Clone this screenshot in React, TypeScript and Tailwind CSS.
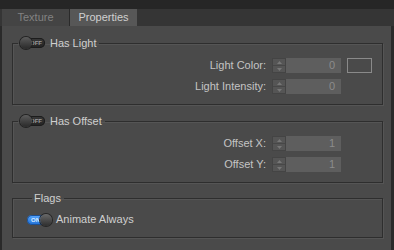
import React from "react";

const font = { fontFamily: '"Liberation Sans", Arial, sans-serif' };

const Toggle = ({ on }: { on?: boolean }) =>
  on ? (
    <div className="relative flex h-[10px] w-[24px] shrink-0 items-center rounded-full bg-gradient-to-b from-[#5aa8ff] to-[#1c6fd6] shadow-[inset_0_0_0_1px_#1b4f93]">
      <span className="ml-[4px] text-[6px] font-bold leading-none text-[#d8ecff]">ON</span>
      <div className="absolute right-[-1px] top-[-1px] h-[12px] w-[12px] rounded-full bg-gradient-to-b from-[#6a6a6a] to-[#2e2e2e] shadow-[0_0_0_1px_#262626]" />
    </div>
  ) : (
    <div className="relative flex h-[10px] w-[24px] shrink-0 items-center justify-end rounded-full bg-gradient-to-b from-[#3a3a3a] to-[#222] shadow-[inset_0_0_0_1px_#1c1c1c]">
      <span className="mr-[3px] text-[6px] font-bold leading-none text-[#9a9a9a]">OFF</span>
      <div className="absolute left-[-1px] top-[-1px] h-[12px] w-[12px] rounded-full bg-gradient-to-b from-[#5c5c5c] to-[#2a2a2a] shadow-[0_0_0_1px_#222]" />
    </div>
  );

const Spinner = () => (
  <div className="flex h-[15px] w-[14px] flex-col border border-[#444] bg-[#555]">
    <div className="flex flex-1 items-center justify-center border-b border-[#474747]">
      <svg width="5" height="3" viewBox="0 0 5 3">
        <path d="M0 3 L2.5 0 L5 3 Z" fill="#777" />
      </svg>
    </div>
    <div className="flex flex-1 items-center justify-center">
      <svg width="5" height="3" viewBox="0 0 5 3">
        <path d="M0 0 L2.5 3 L5 0 Z" fill="#777" />
      </svg>
    </div>
  </div>
);

const Row = ({ label, value, swatch }: { label: string; value: string; swatch?: boolean }) => (
  <div className="flex h-[15px] items-center justify-end pr-[10px]">
    <span className="mr-[6px] text-[11px] text-[#c4c4c4]">{label}</span>
    <Spinner />
    <div className="flex h-[15px] w-[55px] items-center justify-end bg-[#5e5e5e] pr-[6px] text-[11px] text-[#8c8c8c]">
      {value}
    </div>
    <div className="flex w-[31px] justify-end">
      {swatch && <div className="h-[15px] w-[25px] border border-[#8a8a8a] bg-[#4a4a4a]" />}
    </div>
  </div>
);

const Group = ({
  legend,
  children,
  className,
}: {
  legend: React.ReactNode;
  children: React.ReactNode;
  className?: string;
}) => (
  <fieldset
    className={`ml-[10px] mr-[8px] shrink-0 border border-[#2e2e2e] shadow-[1px_1px_0_#555,inset_1px_1px_0_#555] ${className ?? ""}`}
  >
    <legend className="ml-[5px] flex h-[12px] items-center gap-[5px] px-[3px]">{legend}</legend>
    {children}
  </fieldset>
);

export default function App() {
  return (
    <div className="flex h-[250px] w-[394px] flex-col overflow-hidden bg-[#2a2a2a]" style={font}>
      <div className="h-[9px] shrink-0 bg-[#262626]" />
      <div className="flex h-[17px] shrink-0 bg-[#353535] pl-[2px]">
        <div className="flex w-[68px] items-center justify-center border-r border-[#2a2a2a] bg-[#444] text-[11px] text-[#828282]">
          Texture
        </div>
        <div className="flex w-[67px] items-center justify-center bg-[#575757] text-[11px] text-[#d0d0d0]">
          Properties
        </div>
      </div>
      <div className="ml-[2px] mr-[3px] flex flex-1 shrink-0 flex-col bg-[#4a4a4a] pt-[11px]">
        <Group
          legend={
            <>
              <Toggle />
              <span className="text-[11px] leading-none text-[#cfcfcf]">Has Light</span>
            </>
          }
          className="flex flex-col gap-[6px] pb-[10px] pt-[9px]"
        >
          <Row label="Light Color:" value="0" swatch />
          <Row label="Light Intensity:" value="0" />
        </Group>
        <Group
          legend={
            <>
              <Toggle />
              <span className="text-[11px] leading-none text-[#cfcfcf]">Has Offset</span>
            </>
          }
          className="mt-[10px] flex flex-col gap-[6px] pb-[10px] pt-[9px]"
        >
          <Row label="Offset X:" value="1" />
          <Row label="Offset Y:" value="1" />
        </Group>
        <Group
          legend={<span className="-ml-[1px] text-[11px] leading-none text-[#cfcfcf]">Flags</span>}
          className="mt-[9px] pb-[11px] pl-[14px] pt-[9px]"
        >
          <div className="flex h-[13px] items-center gap-[5px]">
            <Toggle on />
            <span className="text-[11px] leading-none text-[#cfcfcf]">Animate Always</span>
          </div>
        </Group>
      </div>
    </div>
  );
}
